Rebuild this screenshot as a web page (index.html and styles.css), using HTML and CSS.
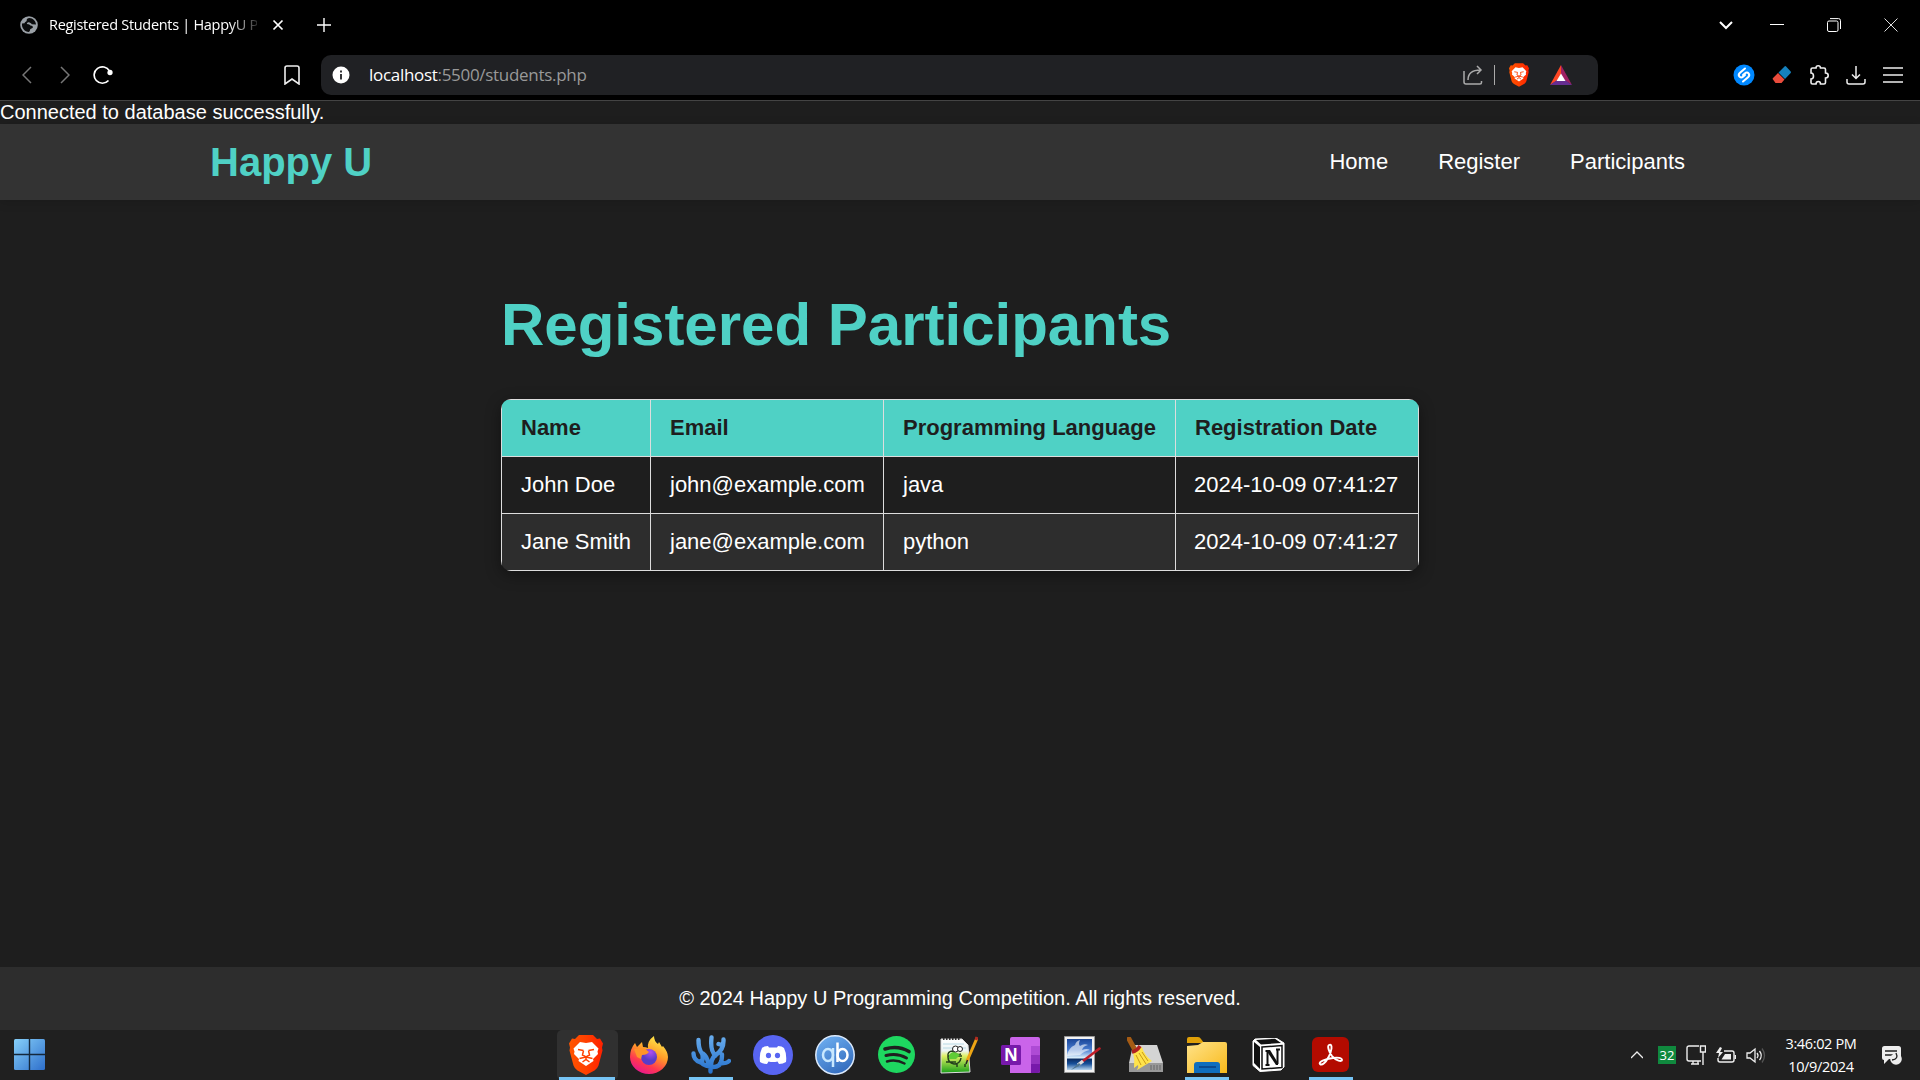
FILE: index.html
```html
<!DOCTYPE html>
<html lang="en">
<head>
<meta charset="utf-8">
<title>Registered Students | HappyU</title>
<link rel="stylesheet" href="styles.css">
</head>
<body>
<div class="tabs">
  <div class="tab">
    <svg class="globe" width="18" height="18" viewBox="0 0 18 18"><circle cx="9" cy="9" r="8.800" fill="#9aa0a6"/><path d="M9.500 2c-2 0-3 1.200-2.800 2.600.2 1.400-2 1.200-2.200 2.600L2 7.500C1.500 12 4.500 15.800 9 16l1-1.500c-.5-1.200 1.200-1.800 2.500-2.500.8-.6.300-2-1-2.200C9.500 9.500 10 8 8 8.200c-1.500 0-1.500-1.500-.2-1.800 1.800-.5 3.200.8 4 1.800L16 8.500C15.800 5 13 2 9.500 2z" fill="#0b0c0d"/></svg>
    <span class="tab-title">Registered Students | HappyU P</span>
    <svg width="12" height="12" viewBox="0 0 12 12" stroke="#fff" stroke-width="1.700"><path d="M1.500 1.500l9 9M10.500 1.500l-9 9"/></svg>
  </div>
  <svg class="plus" width="14" height="14" viewBox="0 0 14 14" stroke="#fff" stroke-width="1.400"><path d="M7 0v14M0 7h14"/></svg>
  <div class="window-controls">
    <svg class="chevron" width="14" height="14" viewBox="0 0 14 14" fill="none" stroke="#fff" stroke-width="2"><path d="M1 4l6 6 6-6"/></svg>
    <svg width="14" height="14" viewBox="0 0 14 14" stroke="#fff"><path d="M0 6.500h14"/></svg>
    <svg width="14" height="14" viewBox="0 0 14 14" fill="none" stroke="#fff"><rect x=".5" y="3" width="10.500" height="10.500" rx="1.500"/><path d="M3 .6h8.500a2 2 0 0 1 2 2V11"/></svg>
    <svg width="14" height="14" viewBox="0 0 14 14" stroke="#ddd"><path d="M.5.5l13 13M13.500.5l-13 13"/></svg>
  </div>
</div>
<div class="toolbar">
  <div class="nav-buttons">
    <svg width="10" height="18" viewBox="0 0 10 18" fill="none" stroke="#777" stroke-width="1.500"><path d="M9 1L1 9l8 8"/></svg>
    <svg width="10" height="18" viewBox="0 0 10 18" fill="none" stroke="#777" stroke-width="1.500"><path d="M1 1l8 8-8 8"/></svg>
    <svg class="reload" width="20" height="20" viewBox="0 0 20 20" fill="none" stroke="#fff" stroke-width="1.700"><path d="M15.500 15.500A8.200 8.200 0 1 1 16.500 6"/><circle cx="17" cy="7.500" r="1.800" fill="#fff"/></svg>
  </div>
  <svg class="bookmark" width="16" height="20" viewBox="0 0 16 20" fill="none" stroke="#eee" stroke-width="1.600"><path d="M1 3a2 2 0 0 1 2-2h10a2 2 0 0 1 2 2v16l-7-5-7 5z"/></svg>
  <div class="address">
    <svg width="18" height="18" viewBox="0 0 18 18"><circle cx="9" cy="9" r="8.500" fill="#fff"/><path d="M9 8v5.500M9 4.500v2" stroke="#202124" stroke-width="1.800"/></svg>
    <span class="url"><b>localhost</b>:5500/students.php</span>
    <svg class="share" width="20" height="20" viewBox="0 0 20 20" fill="none" stroke="#aaa" stroke-width="1.500"><path d="M1 6v11a2 2 0 0 0 2 2h14a1.500 1.500 0 0 0 1.500-1.500V16M5 15c0-6 4-10 12.500-10M14 1l4 4-4 4"/></svg>
    <i class="divider"></i>
    <svg class="shield" width="20" height="24" viewBox="0 0 34 40"><use href="#lion"/></svg>
    <svg width="22" height="20" viewBox="0 0 22 20"><path d="M11 0L0 20l11-7z" fill="#ff4724"/><path d="M11 0l11 20-11-7z" fill="#9e1f63"/><path d="M0 20h22l-7-5H7z" fill="#662d91"/><path d="M11 8.500L6.500 16h9z" fill="#fff"/></svg>
  </div>
  <div class="extensions">
    <svg width="22" height="22" viewBox="0 0 22 22"><circle cx="11" cy="11" r="10.500" fill="#08f"/><path d="M12 4.500L7 8.700C4 11.500 7.500 15 10 12.700l2-1.700M10 17.500l5-4.200c3-2.800-.5-6.300-3-4L10 11" stroke="#fff" stroke-width="2" fill="none" stroke-linecap="round"/></svg>
    <svg width="20" height="20" viewBox="0 0 20 20"><path d="M12.500 1.500q.8-.8 1.600 0l4.600 5q.6.8 0 1.500L13 14 6.500 7.500z" fill="#1581bd"/><path d="M6 8l6.500 6.500-3 3.500H3.500L1 14.500q-.6-.8 0-1.500z" fill="#ea4c3c"/></svg>
    <svg width="20" height="20" viewBox="0 0 20 20" fill="none" stroke="#eee" stroke-width="1.600"><path d="M2 4.500q0-1.500 1.500-1.500H7q0-2.200 2.200-2.200T11.500 3H15q1.500 0 1.500 1.500V8q2.700 0 2.700 2.500T16.500 13v4.500q0 1.500-1.500 1.500h-3.500q0-2.500-2.200-2.500T7 19H3.500Q2 19 2 17.500V14q2.500 0 2.500-3T2 8z"/></svg>
    <svg width="20" height="20" viewBox="0 0 20 20" fill="none" stroke="#eee" stroke-width="1.500"><path d="M10 1v12M6 9.500l4 4 4-4M1 14v3a2 2 0 0 0 2 2h14a2 2 0 0 0 2-2v-3"/></svg>
    <svg width="20" height="20" viewBox="0 0 20 20" stroke="#eee" stroke-width="1.500"><path d="M0 3h20M0 10h20M0 17h20"/></svg>
  </div>
</div>
<div class="page">
  <p class="status">Connected to database successfully.</p>
  <header class="site-header">
    <h1 class="logo">Happy U</h1>
    <nav class="menu"><a>Home</a><a>Register</a><a>Participants</a></nav>
  </header>
  <main class="content">
    <h2 class="title">Registered Participants</h2>
    <table class="participants">
      <colgroup><col class="c-name"><col class="c-email"><col class="c-lang"><col class="c-date"></colgroup>
      <tr><th>Name</th><th>Email</th><th>Programming Language</th><th>Registration Date</th></tr>
      <tr><td>John Doe</td><td>john@example.com</td><td>java</td><td>2024-10-09 07:41:27</td></tr>
      <tr><td>Jane Smith</td><td>jane@example.com</td><td>python</td><td>2024-10-09 07:41:27</td></tr>
    </table>
  </main>
  <footer class="site-footer">© 2024 Happy U Programming Competition. All rights reserved.</footer>
</div>
<div class="taskbar">
  <svg class="start" width="31" height="31" viewBox="0 0 31 31"><defs><linearGradient id="win" x2="1" y2="1"><stop stop-color="#86d0fa"/><stop offset="1" stop-color="#2e6fcb"/></linearGradient></defs><rect width="31" height="31" rx="1.500" fill="url(#win)"/><path d="M15.500 0v31M0 15.500h31" stroke="#14283c" stroke-width="1.400"/></svg>
  <div class="apps">
    <div class="app active running wide">
      <svg width="34" height="40" viewBox="0 0 34 40"><defs><linearGradient id="br"><stop stop-color="#ff5500"/><stop offset=".5" stop-color="#ff4000"/><stop offset="1" stop-color="#ff2000"/></linearGradient>
      <g id="lion"><path d="M10 0h14l4 4 3-.5 3 5-1 4 .5 3-4 15q-1 3-4 5L17 40l-8.500-4.500q-3-2-4-5L.5 15.500l.5-3-1-4 3-5 3 .5z" fill="url(#br)"/><path d="M11 7l6 1 6-1 6.500 6.500-1 3 .5 2.500-5 5 .5 2L17 31l-7.500-5 .5-2-5-5 .5-2.500-1-3z" fill="#fff"/><path d="M9 14.500l5.500 1M25 14.500l-5.500 1M14.500 15.500l-1 4.500 3.500 2 3.500-2-1-4.500M10.500 23.500l6.500-1.500 6.500 1.500M17 22v2.500M13.500 27l3.500-2.500 3.500 2.500" fill="none" stroke="#ff4000" stroke-width="1.500"/></g></defs><use href="#lion"/></svg>
    </div>
    <div class="app">
      <svg width="38" height="38" viewBox="0 0 38 38"><defs><linearGradient id="fx" x1=".8" y1="0" x2=".3" y2="1"><stop stop-color="#fff44f"/><stop offset=".45" stop-color="#ff9a28"/><stop offset=".75" stop-color="#ff3750"/><stop offset="1" stop-color="#e5178f"/></linearGradient><radialGradient id="fp" cx=".6" cy=".2"><stop stop-color="#b04ff0"/><stop offset="1" stop-color="#5a3cc8"/></radialGradient></defs><path d="M5 7l2 4 5-5 1 5q3 0 5 1-1-7 6-12 0 5 4 8l1-2 3 5 1-1q5 6 5 11a19 17 0 0 1-38 0Q0 13 5 7z" fill="url(#fx)"/><circle cx="19" cy="21" r="8" fill="url(#fp)"/><path d="M4 13l10-1 5 4q-2 3-7 3l-1 4-4-2z" fill="#ff9428"/></svg>
    </div>
    <div class="app running">
      <svg width="40" height="39" viewBox="0 0 40 39"><defs><linearGradient id="co" gradientUnits="userSpaceOnUse" x1="0" y1="0" x2="0" y2="39"><stop stop-color="#6aaeee"/><stop offset="1" stop-color="#2470cc"/></linearGradient></defs><g fill="none" stroke="url(#co)" stroke-width="4.400" stroke-linecap="round" stroke-linejoin="round"><path d="M19.500 36.500v-5M19 31.500Q11 30.500 9.500 26M9.500 27.500Q2.500 25 2.500 18.500M11 27Q13 20 9.500 16 7.500 12 7.500 5M12 18.500q4 3 5 9M20 31q0-7 4.500-11M24.500 20.500Q19 16 20.500 2.500M24.500 20Q33 15 32.500 4.500M31 10l-3.500-1M20 32q9 1 10.500-6.500.5-3 .5-6M29 28.500q7 0 9-2.500"/></g></svg>
    </div>
    <div class="app">
      <svg width="40" height="40" viewBox="0 0 40 40"><circle cx="20" cy="20" r="20" fill="#5865f2"/><path d="M15 11q-4 0-6 2-3 6-2 14 3 2 7 2l1.500-2.500q4.500 1 9 0L26 29q4 0 7-2 1-8-2-14-2-2-6-2l-1 1.500h-8z" fill="#fff"/><ellipse cx="15.500" cy="20.500" rx="2.600" ry="2.800" fill="#5865f2"/><ellipse cx="24.500" cy="20.500" rx="2.600" ry="2.800" fill="#5865f2"/></svg>
    </div>
    <div class="app">
      <svg width="40" height="40" viewBox="0 0 40 40"><defs><linearGradient id="qb" x2=".6" y2="1"><stop stop-color="#72b4f5"/><stop offset="1" stop-color="#356ebf"/></linearGradient></defs><circle cx="20" cy="20" r="19.200" fill="url(#qb)" stroke="#dbe9fb" stroke-width="1.500"/><g fill="none" stroke-width="2.500"><g stroke="#c8e8ff"><ellipse cx="13" cy="20" rx="5" ry="6"/><path d="M18 13v19"/></g><g stroke="#fff"><path d="M22.500 7.500V27"/><ellipse cx="27.500" cy="20" rx="5" ry="6"/></g></g></svg>
    </div>
    <div class="app">
      <svg width="37" height="37" viewBox="0 0 37 37"><circle cx="18.500" cy="18.500" r="18.500" fill="#1ed760"/><g fill="none" stroke="#1f1f1f" stroke-linecap="round"><path d="M7 13q13-4 24 2.500" stroke-width="3.600"/><path d="M8 19.500q11-3 20.500 2.500" stroke-width="3"/><path d="M9 25.500q9-2.500 17.500 2" stroke-width="2.500"/></g></svg>
    </div>
    <div class="app">
      <svg width="38" height="38" viewBox="0 0 38 38"><defs><linearGradient id="np" x2="0" y2="1"><stop stop-color="#fff"/><stop offset=".35" stop-color="#ecf4f4"/><stop offset=".5" stop-color="#dff064"/><stop offset="1" stop-color="#18a018"/></linearGradient></defs><path d="M1 3h21l6 6 2 27-29 1z" fill="url(#np)" stroke="#ddd"/><path d="M3 3h18" stroke="#333" stroke-width="2" stroke-dasharray="1.500 1.500"/><path d="M3 8h21M3 12h23" stroke="#b8d8e4"/><path d="M21 18q-7 2-8-3-6 0-5 6 0 6 6 7 6 0 7-6M8 20h14M6 26h10M17 28v3M25 28v3" fill="none" stroke="#24401c" stroke-width="1.500"/><path d="M9 19q4-6 11 0l-4 4H9z" fill="#60cc36"/><circle cx="15.500" cy="13" r="3" fill="#fff" stroke="#222"/><circle cx="20" cy="13" r="2.500" fill="#fff" stroke="#222"/><path d="M37 2L27 25" stroke="#eda514" stroke-width="3"/><path d="M37 1l-1 3" stroke="#b02a20" stroke-width="3"/><path d="M27.500 24l-1.500 4" stroke="#222" stroke-width="1.500"/></svg>
    </div>
    <div class="app">
      <svg width="39" height="36" viewBox="0 0 39 36"><path d="M11 0h26q2 0 2 2v32q0 2-2 2H9V2q0-2 2-2z" fill="#ca64ea"/><path d="M30 9h9v9h-9z" fill="#ae4bd5"/><path d="M30 18h9v9h-9z" fill="#9332bf"/><path d="M9 27h30v7q0 2-2 2H9z" fill="#7719aa"/><path d="M9 27h21v9H9z" fill="#ca64ea"/><rect y="8" width="20" height="20" rx="1.500" fill="#7719aa"/><text x="10" y="23.500" text-anchor="middle" class="glyph-n">N</text></svg>
    </div>
    <div class="app">
      <svg width="37" height="38" viewBox="0 0 37 38"><defs><linearGradient id="pa" x2="0" y2="1"><stop stop-color="#1a4698"/><stop offset=".35" stop-color="#487cd0"/><stop offset=".6" stop-color="#d8edfa"/><stop offset=".66" stop-color="#0c2f66"/><stop offset=".8" stop-color="#17509a"/><stop offset="1" stop-color="#b8d6ee"/></linearGradient></defs><path d="M.5.5h30v36H.5z" fill="#f2f2f2" stroke="#999"/><path d="M3 3h25v31H3z" fill="url(#pa)"/><path d="M3 20q1-8 8-11 1-4 5-5-2 4 0 6 4-3 8-1-5 1-6 5 5-2 8 0-6 1-10 5z" fill="#fff" opacity=".6"/><path d="M35.500 12.500L19 25" stroke="#c01c28" stroke-width="2.600" stroke-linecap="round"/><path d="M19 25l-5 4" stroke="#ddd" stroke-width="3.500"/><path d="M15 27l-8 7 10-5z" fill="#4f7590"/></svg>
    </div>
    <div class="app">
      <svg width="36" height="36" viewBox="0 0 36 36"><path d="M6 8h24l6 18v8q0 1-1 1H3q-1 0-1-1v-8z" fill="#d4d4d4"/><path d="M2 26h34v9H2z" fill="#999"/><path d="M24 28v5M27 28v5M30 28v5M33 28v5" stroke="#666"/><path d="M2 2l6 11" stroke="#a45b14" stroke-width="5" stroke-linecap="round"/><path d="M6 15l9-5q2 8 10 14l-15 9q2-3 1-5l-4 3q1-8-1-16z" fill="#ffe34b"/><path d="M9 18l5 10M12 16l7 11M15 15l6 9" stroke="#c99918"/><path d="M5 15q5-1 8-6" stroke="#b02020" stroke-width="3.500" fill="none"/></svg>
    </div>
    <div class="app running">
      <svg width="40" height="36" viewBox="0 0 40 36"><defs><linearGradient id="fo" x2="1" y2="1"><stop stop-color="#ffe38a"/><stop offset="1" stop-color="#f8b91a"/></linearGradient></defs><path d="M0 2q0-2 2-2h9q2 0 3 2l3 4H0z" fill="#e0a008"/><path d="M0 9l11-1 5-3h22q2 0 2 2v29H0z" fill="url(#fo)"/><path d="M7 36v-8q0-3 3-3h20q3 0 3 3v8z" fill="#0f6ebe"/><path d="M12 30h17" stroke="#0a4a90" stroke-width="2"/></svg>
    </div>
    <div class="app">
      <svg width="33" height="34" viewBox="0 0 33 34"><path d="M3 1l21-1 8 5v24l-3 3-21 1.500-7-6V3z" fill="#fff" stroke="#fff"/><path d="M4 2l19-1.300L29 5 9 6.500z" fill="#111"/><path d="M2 4l6 5v22l-6-6z" fill="#111"/><path d="M10 9l20-1.500v22L10 31z" fill="#fff" stroke="#111" stroke-width="1.500"/><path d="M13.500 13h4M24 11.500h4M13.500 27h4M15.500 13v14M25.500 12v14" stroke="#111" stroke-width="2"/><path d="M14 12h4l8 13v2h-2z" fill="#111"/></svg>
    </div>
    <div class="app running">
      <svg width="37" height="36" viewBox="0 0 37 36"><rect width="37" height="35" rx="6" fill="#b30b00"/><path d="M17 8c4-2 3 7-1 13-2 4-6 8-8 6s5-5 13-6c5-1 9 0 9 2s-6 1-10-4c-3-4-5-10-3-11z" fill="none" stroke="#fff" stroke-width="1.900"/></svg>
    </div>
  </div>
  <div class="tray">
    <svg width="12" height="8" viewBox="0 0 12 8" fill="none" stroke="#eee" stroke-width="1.300"><path d="M0 7l6-6 6 6"/></svg>
    <span class="temp">32</span>
    <svg width="20" height="21" viewBox="0 0 20 21" fill="none" stroke="#eee" stroke-width="1.400"><path d="M13 1H3a2 2 0 0 0-2 2v11a2 2 0 0 0 2 2h12M5 19h8M7 16v3M12 16v3M14.500 1h5v6h-5zM17 7v13"/></svg>
    <svg width="20" height="17" viewBox="0 0 20 17" fill="none" stroke="#eee" stroke-width="1.400"><path d="M8 4h8a2 2 0 0 1 2 2v7a2 2 0 0 1-2 2H4a2 2 0 0 1-2-2v-2"/><path d="M9 7h6v5.500H5.500z" fill="#eee" stroke="none"/><path d="M4 0L0 6h3L2 11l5-6H4l2-4z" fill="#eee" stroke="none"/><path d="M19.300 8v4"/></svg>
    <svg width="20" height="17" viewBox="0 0 20 17" fill="none" stroke="#eee" stroke-width="1.300"><path d="M1 6h3l5-4v13l-5-4H1z"/><path d="M11 6q2 2.500 0 5M13.500 4q3.500 4.500 0 9"/><path d="M16 1.500q5 7 0 14" stroke="#555"/></svg>
    <div class="clock"><span>3:46:02 PM</span><span>10/9/2024</span></div>
    <svg width="20" height="20" viewBox="0 0 20 20"><path d="M2.500 1h14Q19 1 19 3.500V14H7l-5 5v-4Q0 15 0 13V3.500Q0 1 2.500 1z" fill="#eee"/><path d="M3 6h12M3 10h8" stroke="#222" stroke-width="1.400"/><circle cx="14" cy="14" r="5.800" fill="#eee"/><path d="M14 8q3 6-4 7" fill="none" stroke="#222" stroke-width="1.400"/></svg>
  </div>
</div>
</body>
</html>
```
FILE: styles.css
```css
* { box-sizing: border-box; }
body { margin: 0; height: 1080px; overflow: hidden; display: flex; flex-direction: column; background: #1e1e1e; color: #fff; font-family: "Liberation Sans", Arial, sans-serif; }
svg { display: block; flex: none; }

.tabs, .toolbar { background: #000; display: flex; align-items: center; font-family: "Open Sans", sans-serif; }
.tabs { height: 50px; padding: 0 22px 0 20px; }
.tab { display: flex; align-items: center; width: 264px; }
.tab-title { width: 208px; margin: 0 15px 0 11px; padding-bottom: 1px; font-size: 14.5px; letter-spacing: -.3px; white-space: nowrap; overflow: hidden; -webkit-mask-image: linear-gradient(90deg, #000 180px, transparent 214px); mask-image: linear-gradient(90deg, #000 180px, transparent 214px); }
.plus { margin-left: 33px; }
.window-controls { display: flex; gap: 43px; margin-left: auto; }
.chevron { margin-right: -6px; }

.toolbar { height: 51px; padding: 0 17px 0 22px; border-bottom: 1px solid #444; }
.nav-buttons { display: flex; align-items: center; gap: 28px; width: 262px; }
.reload { margin-left: -5px; }
.bookmark { margin-right: 29px; }
.address { width: 1277px; height: 40px; margin-left: -8px; padding: 0 26px 0 11px; display: flex; align-items: center; border-radius: 10px; background: #202124; }
.url { margin-left: 19px; padding-bottom: 2px; font-size: 17px; letter-spacing: -.3px; color: #999; }
.url b { color: #fff; font-weight: 400; }
.share { margin-left: auto; }
.divider { width: 1px; height: 20px; margin: 0 14px 0 11px; background: #aaa; }
.shield { margin-right: 21px; }
.extensions { display: flex; align-items: center; gap: 17px; margin-left: auto; }

.page { height: 929px; display: flex; flex-direction: column; }
.status { margin: 0; height: 23px; font-size: 20px; line-height: 23px; }
.site-header { height: 76px; padding: 0 235px 0 210px; display: flex; align-items: center; justify-content: space-between; background: #333; box-shadow: 0 2px 10px rgba(0, 0, 0, .15); }
.logo { margin: 0; font-size: 40px; line-height: 46px; color: #4fd1c5; }
.menu { display: flex; gap: 50px; font-size: 22px; }
.content { flex: 1; width: 918px; margin: 0 auto; padding-top: 90px; }
.title { margin: 0 0 39px; font-size: 60px; line-height: 70px; color: #4fd1c5; }
.participants { width: 918px; table-layout: fixed; border-collapse: collapse; border-radius: 10px; overflow: hidden; font-size: 22px; box-shadow: 0 4px 15px rgba(0, 0, 0, .4); }
.participants th, .participants td { height: 57px; padding: 0 19px; border: 1px solid #ddd; text-align: left; white-space: nowrap; }
.participants th { background: #4fd1c5; color: #1e1e1e; }
.participants tr:nth-child(odd) td { background: #2d2d2d; }
.participants td:last-child { padding-left: 18px; }
.c-name { width: 149px; }
.c-email { width: 233px; }
.c-lang { width: 292px; }
.c-date { width: 243px; }
.site-footer { height: 63px; line-height: 62px; font-size: 20px; text-align: center; background: #2d2d2d; }

.taskbar { height: 50px; padding: 0 18px 0 14px; display: flex; align-items: center; background: #202020; }
.start { margin: 0 512px 2px 0; }
.apps { display: flex; height: 50px; }
.app { display: flex; align-items: center; justify-content: center; width: 62px; height: 50px; border-bottom: 3px solid transparent; padding: 2px 1px 0 0; }
.running { border-image: linear-gradient(90deg, transparent 11px, #76c4f5 11px, #76c4f5 51px, transparent 51px) 3; }
.active { background: #303030; border-radius: 5px; }
.wide { width: 61px; padding-right: 3px; border-image: linear-gradient(90deg, transparent 5px, #76c4f5 5px, #76c4f5 55px, transparent 55px) 3; }
.glyph-n { font: bold 17px "Open Sans", sans-serif; fill: #fff; }
.tray { margin-left: auto; display: flex; align-items: center; gap: 10px; font-family: "Open Sans", sans-serif; }
.temp { width: 18px; height: 18px; margin-left: 5px; background: #10893e; font-size: 13px; line-height: 18px; text-align: center; }
.clock { display: flex; flex-direction: column; align-items: center; width: 84px; margin: 0 9px 0 3px; font-size: 14.5px; line-height: 23px; letter-spacing: -.35px; white-space: nowrap; }
```
